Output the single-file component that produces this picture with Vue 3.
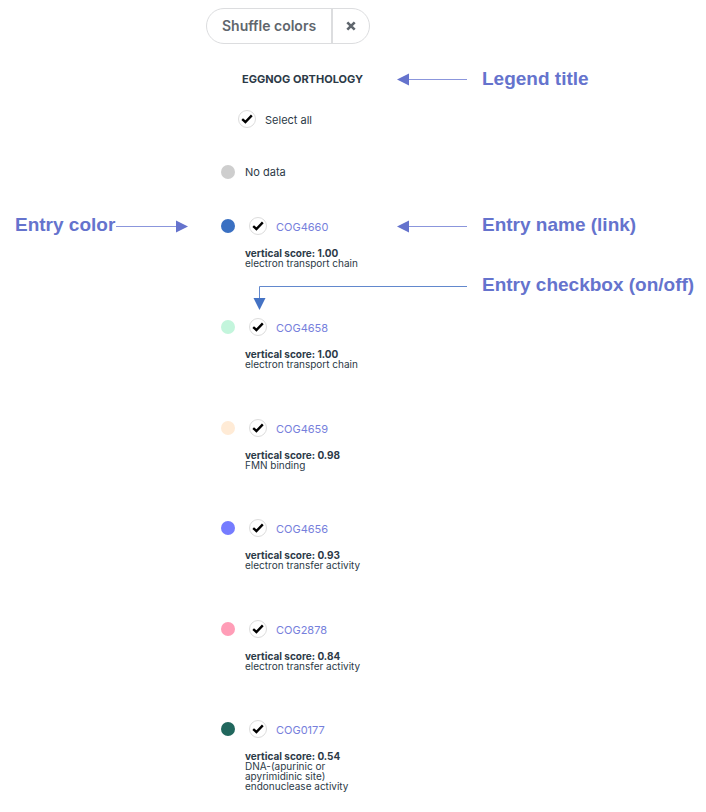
<script setup>
import { ref, computed } from 'vue'

const entries = ref([
  { id: 'COG4660', color: '#3a70c2', score: '1.00', text: 'electron transport chain', on: true },
  { id: 'COG4658', color: '#c3f5dc', score: '1.00', text: 'electron transport chain', on: true },
  { id: 'COG4659', color: '#ffebd6', score: '0.98', text: 'FMN binding', on: true },
  { id: 'COG4656', color: '#757cff', score: '0.93', text: 'electron transfer activity', on: true },
  { id: 'COG2878', color: '#ff9db7', score: '0.84', text: 'electron transfer activity', on: true },
  { id: 'COG0177', color: '#21675d', score: '0.54', text: 'DNA-(apurinic or apyrimidinic site) endonuclease activity', on: true },
])

const allOn = computed({
  get: () => entries.value.every((e) => e.on),
  set: (v) => entries.value.forEach((e) => { e.on = v }),
})

function shuffle() {
  const colors = entries.value.map((e) => e.color).sort(() => Math.random() - 0.5)
  entries.value.forEach((e, i) => { e.color = colors[i] })
}
</script>

<template>
  <main class="page">
    <div class="row toolbar-row">
      <div class="toolbar">
        <button class="shuffle" type="button" @click="shuffle">Shuffle colors</button>
        <button class="close" type="button" aria-label="Close">
          <svg width="10" height="10" viewBox="0 0 10 10"><path d="M1.3 1.3 8.7 8.7M8.7 1.3 1.3 8.7" fill="none" stroke="#5f666d" stroke-width="2.6" /></svg>
        </button>
      </div>
    </div>

    <div class="row title-row">
      <h1 class="title">EGGNOG ORTHOLOGY</h1>
      <div class="callout">
        <svg class="arrow" width="70" height="12" viewBox="0 0 70 12"><path d="M11 6.5H70" stroke="#8b96dc" /><path d="M0 6.5 12 0.5V12.5Z" fill="#6573cd" /></svg>
        <span>Legend title</span>
      </div>
    </div>

    <div class="row">
      <label class="select-all">
        <span class="check">
          <input v-model="allOn" type="checkbox">
          <svg width="12" height="10" viewBox="0 0 12 10"><path d="M1.2 5.2 4.4 8 10.8 1.4" fill="none" stroke="#000" stroke-width="2.4" /></svg>
        </span>
        <span class="name">Select all</span>
      </label>
    </div>

    <div class="row nodata-row">
      <div class="nodata"><i class="dot"></i><span>No data</span></div>
    </div>

    <ul class="entries">
      <li v-for="(e, i) in entries" :key="e.id" class="row entry">
        <div v-if="i === 0" class="callout callout-left">
          <span>Entry color</span>
          <svg class="arrow" width="72" height="12" viewBox="0 0 72 12"><path d="M0 6.5H61" stroke="#8b96dc" /><path d="M72 6.5 60 0.5V12.5Z" fill="#6573cd" /></svg>
        </div>
        <div class="body">
          <div class="head">
            <i class="dot" :style="{ background: e.color }"></i>
            <span class="check">
              <input v-model="e.on" type="checkbox" :aria-label="e.id">
              <svg width="12" height="10" viewBox="0 0 12 10"><path d="M1.2 5.2 4.4 8 10.8 1.4" fill="none" stroke="#000" stroke-width="2.4" /></svg>
            </span>
            <a class="name" href="#">{{ e.id }}</a>
          </div>
          <p class="detail"><strong>vertical score: {{ e.score }}</strong><br>{{ e.text }}</p>
        </div>
        <div v-if="i === 0" class="notes">
          <div class="callout">
            <svg class="arrow" width="70" height="12" viewBox="0 0 70 12"><path d="M11 6.5H70" stroke="#8b96dc" /><path d="M0 6.5 12 0.5V12.5Z" fill="#6573cd" /></svg>
            <span>Entry name (link)</span>
          </div>
          <div class="callout callout-elbow">
            <svg class="elbow" width="214" height="26" viewBox="0 0 214 26"><path d="M6.5 15V1.5H214" fill="none" stroke="#6288cd" /><path d="M0.5 13H12.5L6.5 25Z" fill="#4472c4" /></svg>
            <span>Entry checkbox (on/off)</span>
          </div>
        </div>
      </li>
    </ul>
  </main>
</template>

<style>
body {
  margin: 0;
  background: #fff;
}
</style>

<style scoped>
.page {
  padding: 8px 0 20px;
  font-family: Inter, "Liberation Sans", sans-serif;
  font-size: 11px;
  line-height: 18px;
  color: #2c3a47;
}
.row {
  display: grid;
  grid-template-columns: 206px 191px 1fr;
}
.row > * {
  grid-column: 2;
  grid-row: 1;
}
.toolbar {
  display: flex;
  justify-self: start;
  box-sizing: border-box;
  height: 36px;
  border: 1px solid #dcdddf;
  border-radius: 18px;
}
button {
  display: flex;
  align-items: center;
  padding: 0;
  border: 0;
  background: none;
  color: #5f666d;
  font: 600 14px/20px Inter, sans-serif;
  cursor: pointer;
}
.shuffle {
  padding: 0 15px;
  border-right: 2px solid #dcdddf;
}
.close {
  padding: 0 13px;
}
.title-row {
  padding: 26px 0 22px;
}
.title {
  margin: 0 0 0 36px;
  font-size: 11px;
  font-weight: 700;
  line-height: 18px;
  white-space: nowrap;
}
.row > .callout,
.notes {
  grid-column: 3;
}
.callout {
  display: flex;
  align-items: center;
  gap: 15px;
  height: 18px;
  font: 700 19px/18px "Liberation Sans", Arial, sans-serif;
  color: #6573cd;
  white-space: nowrap;
}
.row > .callout-left {
  grid-column: 1;
  gap: 1px;
  padding-left: 15px;
}
.arrow {
  flex: none;
  overflow: visible;
}
.notes {
  display: grid;
  align-content: start;
  gap: 42px;
}
.entry .callout span {
  padding-bottom: 2px;
}
.callout-elbow {
  position: relative;
  padding-left: 85px;
}
.elbow {
  position: absolute;
  left: -144px;
  top: 8px;
}
.select-all {
  display: flex;
  align-items: center;
  gap: 9px;
  padding-left: 32px;
}
.name {
  height: 16px;
}
.check {
  display: grid;
  place-items: center;
  width: 18px;
  height: 18px;
}
.check > * {
  grid-area: 1 / 1;
}
.check input {
  appearance: none;
  box-sizing: border-box;
  width: 18px;
  height: 18px;
  margin: 0;
  border: 1px solid #dcdcdc;
  border-radius: 50%;
  background: #fff;
}
.check svg {
  z-index: 1;
  visibility: hidden;
  pointer-events: none;
}
.check input:checked + svg {
  visibility: visible;
}
.nodata-row {
  padding: 35px 0 36px;
}
.nodata {
  display: flex;
  align-items: center;
  gap: 10px;
  padding-left: 15px;
}
.dot {
  width: 14px;
  height: 14px;
  border-radius: 50%;
  background: #cecece;
}
.entries {
  display: grid;
  grid-template-rows: 101px 101px 100px 101px 100px auto;
  margin: 0;
  padding: 0;
  list-style: none;
}
.head {
  display: flex;
  align-items: center;
  padding-left: 15px;
}
.head .check {
  margin: 0 9px 0 14px;
}
a {
  color: #7680dc;
  text-decoration: none;
}
.detail {
  width: 126px;
  margin: 13px 0 0 39px;
  font-size: 10px;
  line-height: 10px;
}
</style>
